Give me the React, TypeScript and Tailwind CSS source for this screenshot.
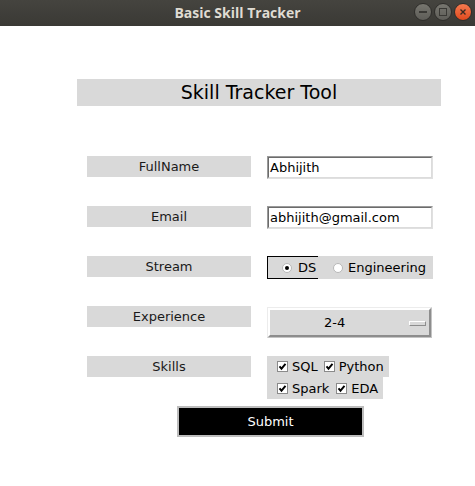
import React from "react";

const font = { fontFamily: '"DejaVu Sans", sans-serif' };

function Label({ text }: { text: string }) {
  return (
    <div className="w-[164px] h-[21px] bg-[#d9d9d9] flex items-center justify-center text-[13px] text-[#1a1a1a] leading-none">
      {text}
    </div>
  );
}

function Entry({ value }: { value: string }) {
  return (
    <div className="w-[166px] h-[23px] border border-t-[#9a9a9a] border-l-[#9a9a9a] border-b-[#e0e0e0] border-r-[#e0e0e0] bg-white">
      <div className="w-full h-full border border-[#dcdcdc] border-t-[#6b6b6b] border-l-[#6b6b6b] flex items-center pl-[1px] text-[13px] text-black leading-none">
        {value}
      </div>
    </div>
  );
}

function Radio({ on }: { on: boolean }) {
  return (
    <div className="w-[10px] h-[10px] rounded-full bg-white border border-[#b8b8b8] flex items-center justify-center">
      {on && <div className="w-[4px] h-[4px] rounded-full bg-black" />}
    </div>
  );
}

function Check() {
  return (
    <div className="w-[11px] h-[11px] bg-white border border-[#8a8a8a] flex items-center justify-center">
      <svg width="9" height="9" viewBox="0 0 9 9">
        <path d="M1.5 4.3 L3.5 6.7 L7.5 1.8" stroke="#000" strokeWidth="1.9" fill="none" />
      </svg>
    </div>
  );
}

export default function App() {
  return (
    <div className="w-[475px] h-[486px] bg-white relative overflow-hidden" style={font}>
      <div className="h-[26px] bg-gradient-to-b from-[#45443f] to-[#3a3935] flex items-center justify-center relative">
        <span
          className="text-[14px] font-bold text-[#dfdbd2] leading-none"
          style={{ fontFamily: '"Open Sans", "DejaVu Sans", sans-serif' }}
        >
          Basic Skill Tracker
        </span>
        <div className="absolute right-[3px] top-[3px] flex gap-[2px]">
          <div className="w-[18px] h-[18px] rounded-full bg-gradient-to-b from-[#77766f] to-[#5e5d58] border border-[#2f2e2b] flex items-center justify-center">
            <div className="w-[8px] h-[1.5px] bg-[#3a3935]" />
          </div>
          <div className="w-[18px] h-[18px] rounded-full bg-gradient-to-b from-[#77766f] to-[#5e5d58] border border-[#2f2e2b] flex items-center justify-center">
            <div className="w-[8px] h-[8px] border border-[#3a3935]" />
          </div>
          <div className="w-[18px] h-[18px] rounded-full bg-gradient-to-b from-[#f57a4e] to-[#e0491c] border border-[#2f2e2b] flex items-center justify-center">
            <svg width="8" height="8" viewBox="0 0 8 8">
              <path d="M1.5 1.5 L6.5 6.5 M6.5 1.5 L1.5 6.5" stroke="#3a2a22" strokeWidth="1.4" />
            </svg>
          </div>
        </div>
      </div>

      <div className="flex flex-col">
        <div className="ml-[77px] mt-[53px] w-[364px] h-[27px] bg-[#d9d9d9] flex items-center justify-center text-[19px] text-black leading-none">
          Skill Tracker Tool
        </div>

        <div className="mt-[50px] flex gap-[16px] ml-[87px] h-[50px]">
          <Label text="FullName" />
          <Entry value="Abhijith" />
        </div>

        <div className="flex gap-[16px] ml-[87px] h-[50px]">
          <Label text="Email" />
          <Entry value="abhijith@gmail.com" />
        </div>

        <div className="flex gap-[16px] ml-[87px] h-[50px]">
          <Label text="Stream" />
          <div className="w-[166px] h-[23px] bg-[#d9d9d9] flex items-center text-[13px] text-black leading-none">
            <div className="w-[51px] h-full border border-black border-r-0 flex items-center gap-[6px] pl-[14px]">
              <Radio on />
              <span>DS</span>
            </div>
            <div className="flex items-center gap-[5px] pl-[15px]">
              <Radio on={false} />
              <span>Engineering</span>
            </div>
          </div>
        </div>

        <div className="flex gap-[16px] ml-[87px] h-[50px]">
          <Label text="Experience" />
          <div className="mt-[1px] w-[165px] h-[31px] bg-[#d9d9d9] border border-[#ececec] border-r-[#c4c4c4] border-b-[#c4c4c4]">
            <div className="w-full h-full border-2 border-t-white border-l-white border-r-[#8d8d8d] border-b-[#8d8d8d] flex items-center relative text-[13px] text-black leading-none">
              <span className="absolute left-[54px]">2-4</span>
              <div className="absolute left-[139px] top-[11px] w-[17px] h-[5px] border border-t-white border-l-white border-r-[#8d8d8d] border-b-[#8d8d8d] bg-[#d9d9d9]" />
            </div>
          </div>
        </div>

        <div className="flex gap-[16px] ml-[87px]">
          <Label text="Skills" />
          <div className="flex flex-col text-[13px] text-black leading-none">
            <div className="w-[122px] h-[21px] bg-[#d9d9d9] flex items-center pl-[10px]">
              <Check />
              <span className="ml-[4px]">SQL</span>
              <span className="ml-[6px]"><Check /></span>
              <span className="ml-[4px]">Python</span>
            </div>
            <div className="w-[116px] h-[22px] bg-[#d9d9d9] flex items-center pl-[10px]">
              <Check />
              <span className="ml-[4px]">Spark</span>
              <span className="ml-[7px]"><Check /></span>
              <span className="ml-[4px]">EDA</span>
            </div>
          </div>
        </div>

        <div className="ml-[177px] mt-[7px] w-[187px] h-[31px] bg-black border-2 border-[#bdbdbd] flex items-center justify-center text-white text-[13px] leading-none">
          Submit
        </div>
      </div>
    </div>
  );
}
